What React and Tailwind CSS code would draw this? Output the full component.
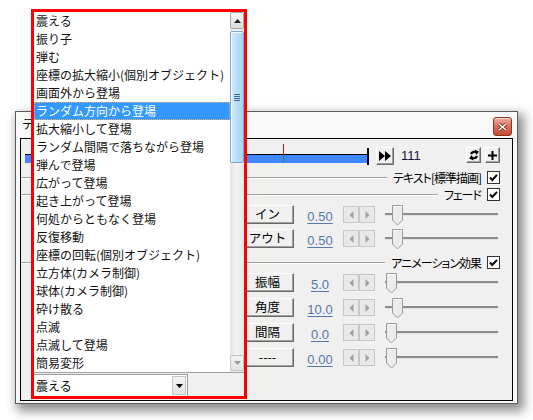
import React from 'react';

const JP = "font-['Noto_Sans_CJK_JP',sans-serif]";

const ITEMS = [
  '震える', '振り子', '弾む', '座標の拡大縮小(個別オブジェクト)', '画面外から登場',
  'ランダム方向から登場', '拡大縮小して登場', 'ランダム間隔で落ちながら登場', '弾んで登場',
  '広がって登場', '起き上がって登場', '何処からともなく登場', '反復移動',
  '座標の回転(個別オブジェクト)', '立方体(カメラ制御)', '球体(カメラ制御)', '砕け散る',
  '点滅', '点滅して登場', '簡易変形',
];

const bevel =
  'bg-[#f0f0f0] border border-t-white border-l-white border-r-[#696969] border-b-[#696969] shadow-[inset_-1px_-1px_0_#a0a0a0]';

// Checkbox (checked)
function Check() {
  return (
    <svg width="13" height="13" viewBox="0 0 13 13" className="shrink-0">
      <rect x="0.5" y="0.5" width="12" height="12" fill="#fff" stroke="#333" />
      <path d="M3 6.5 L5.3 9 L10 3.8" fill="none" stroke="#000" strokeWidth="2" />
    </svg>
  );
}

// Etched divider with label + checkbox
function Divider({ label, className = '' }) {
  return (
    <div className={'flex items-center h-[13px] pr-[12px] ' + className}>
      <div className="flex-1 h-[2px] border-t border-[#a0a0a0] border-b border-b-white" />
      <span className={JP + " ml-[6px] text-[12px] leading-none tracking-[-1px] text-black [font-feature-settings:'palt']"}>{label}</span>
      <span className="ml-[6px]"><Check /></span>
    </div>
  );
}

function Spin() {
  return (
    <div className="flex w-[32px] h-[17px] ml-[3px]">
      {['L', 'R'].map((d) => (
        <div key={d} className="w-[16px] h-[17px] grid place-items-center bg-[#e9e9e9] border border-[#c8c8c8]">
          <svg width="5" height="8" viewBox="0 0 5 8">
            {d === 'L'
              ? <path d="M4.5 0 L0.5 4 L4.5 8 Z" fill="#a2a2a2" />
              : <path d="M0.5 0 L4.5 4 L0.5 8 Z" fill="#a2a2a2" />}
          </svg>
        </div>
      ))}
    </div>
  );
}

function Slider({ pos }) {
  return (
    <div className="relative ml-[10px] w-[113px] h-[19px]">
      <div className="absolute left-0 right-0 top-[8px] h-[3px] bg-[#8c8c8c] border-b border-b-[#e0e0e0]" />
      <svg width="11" height="21" viewBox="0 0 11 21" className="absolute top-0" style={{ left: pos }}>
        <path d="M0.5 0.5 H10.5 V15 L5.5 20 L0.5 15 Z" fill="#ececec" stroke="#9a9a9a" />
        <path d="M1.5 1.5 H9.5" stroke="#fff" />
      </svg>
    </div>
  );
}

function ParamRow({ label, value, pos, className = '' }) {
  return (
    <div className={'flex items-center h-[19px] ' + className}>
      <div className={bevel + ' ml-[220px] w-[53px] h-[19px] grid place-items-center'}>
        <span className={JP + ' text-[12.5px] leading-none text-black'}>{label}</span>
      </div>
      <div className="ml-[6px] w-[40px] text-center">
        <span className="font-['Liberation_Sans',sans-serif] text-[13px] leading-none text-[#5577a8] underline underline-offset-2">{value}</span>
      </div>
      <Spin />
      <Slider pos={pos} />
    </div>
  );
}

function Timeline() {
  return (
    <div className="flex items-start h-[21px] mt-[5px]">
      <div className="relative ml-[4px] w-[344px] h-[21px]">
        <div className="absolute left-0 right-0 top-[10px] h-[9px] bg-[#3f86ff] border-t border-black" />
        <div className="absolute right-0 top-[4px] w-[2px] h-[17px] bg-black" />
        <div className="absolute left-[258px] top-0 w-px h-[11px] bg-[#e01010]" />
        <div className="absolute left-[258px] top-[11px] w-px h-[8px] bg-[#2f8a40]" />
      </div>
      <div className={bevel + ' ml-[7px] mt-[3px] w-[18px] h-[18px] grid place-items-center'}>
        <svg width="12" height="10" viewBox="0 0 12 10">
          <path d="M0 0 L6 5 L0 10 Z M6 0 L12 5 L6 10 Z" fill="#000" />
        </svg>
      </div>
      <span className="ml-[7px] mt-[4px] font-['Liberation_Sans',sans-serif] text-[13px] leading-[16px] text-[#14143c]">111</span>
      <div className="flex-1" />
      <div className={bevel + ' mt-[3px] w-[15px] h-[16px] grid place-items-center'}>
        <svg width="10" height="12" viewBox="0 0 10 12">
          <path d="M7.8 4 A3.4 3.4 0 0 0 2 5" fill="none" stroke="#000" strokeWidth="2.2" />
          <path d="M2.2 8 A3.4 3.4 0 0 0 8 7" fill="none" stroke="#000" strokeWidth="2.2" />
          <path d="M5.5 0.5 L9.8 2.5 L7.5 6 Z" fill="#000" />
          <path d="M4.5 11.5 L0.2 9.5 L2.5 6 Z" fill="#000" />
        </svg>
      </div>
      <div className={bevel + ' ml-[4px] mt-[3px] w-[15px] h-[16px] grid place-items-center'}>
        <svg width="9" height="9" viewBox="0 0 9 9">
          <path d="M3.5 0 H5.5 V3.5 H9 V5.5 H5.5 V9 H3.5 V5.5 H0 V3.5 H3.5 Z" fill="#000" />
        </svg>
      </div>
      <div className="w-[12px]" />
    </div>
  );
}

function SettingWindow() {
  return (
    <div className="ml-[15px] mt-[111px] w-[503px] h-[293px] flex flex-col border border-[#5a5a5a] bg-[#f8f8f8] px-[4px] pb-[2px] shadow-[4px_5px_10px_2px_rgba(0,0,0,0.45)]">
      <div className="h-[26px] flex items-center">
        <span className={JP + ' ml-[2px] mb-[2px] text-[12px] leading-none text-black'}>テ</span>
        <div className="flex-1" />
        <div className="mr-[1px] mt-[3px] w-[19px] h-[19px] rounded-[3px] border border-[#8a3424] bg-gradient-to-b from-[#eab0a2] via-[#d6705c] to-[#c24a33] grid place-items-center shadow-[inset_0_1px_0_rgba(255,255,255,0.5)]">
          <svg width="9" height="8" viewBox="0 0 9 8">
            <path d="M1 1 L8 7 M8 1 L1 7" stroke="#7a2a1c" strokeWidth="3" />
            <path d="M1 1 L8 7 M8 1 L1 7" stroke="#fff" strokeWidth="1.6" />
          </svg>
        </div>
      </div>
      <div className="flex-1 flex flex-col border border-black bg-[#f0f0f0]">
        <Timeline />
        <Divider label="テキスト[標準描画]" className="mt-[6px]" />
        <Divider label="フェード" className="mt-[4px]" />
        <ParamRow label="イン" value="0.50" pos={7} className="mt-[4px]" />
        <ParamRow label="アウト" value="0.50" pos={7} className="mt-[5px]" />
        <Divider label="アニメーション効果" className="mt-[8px]" />
        <ParamRow label="振幅" value="5.0" pos={1} className="mt-[4px]" />
        <ParamRow label="角度" value="10.0" pos={7} className="mt-[6px]" />
        <ParamRow label="間隔" value="0.0" pos={1} className="mt-[6px]" />
        <ParamRow label="----" value="0.00" pos={1} className="mt-[6px]" />
      </div>
    </div>
  );
}

function ScrollBar() {
  return (
    <div className="w-[14px] h-[360px] flex flex-col bg-gradient-to-r from-[#e6e6e6] via-[#f4f4f4] to-[#e6e6e6]">
      <div className="h-[17px] rounded-[2px] border border-[#a8a8a8] bg-gradient-to-b from-[#f6f6f6] to-[#dcdcdc] grid place-items-center">
        <svg width="7" height="4" viewBox="0 0 7 4"><path d="M0 4 L3.5 0 L7 4 Z" fill="#222" /></svg>
      </div>
      <div className="mt-[2px] h-[132px] rounded-[2px] border border-[#7ba9cf] bg-gradient-to-r from-[#d5ecfb] via-[#b9def7] to-[#a6d3f3] shadow-[inset_1px_1px_0_rgba(255,255,255,0.8)] flex flex-col items-center justify-center gap-[1px]">
        <div className="w-[6px] h-px bg-[#3b6e98]" />
        <div className="w-[6px] h-px bg-[#3b6e98]" />
        <div className="w-[6px] h-px bg-[#3b6e98]" />
        <div className="w-[6px] h-px bg-[#3b6e98]" />
      </div>
      <div className="flex-1" />
      <div className="mb-[1px] h-[16px] rounded-[2px] border border-[#c4c4c4] bg-gradient-to-b from-[#f4f4f4] to-[#e4e4e4] grid place-items-center">
        <svg width="7" height="4" viewBox="0 0 7 4"><path d="M0 0 L3.5 4 L7 0 Z" fill="#9a9a9a" /></svg>
      </div>
    </div>
  );
}

function DropList() {
  return (
    <div className="absolute left-[31px] top-[9px] w-[216px] h-[390px] border-[3px] border-[#ff0000] bg-white flex flex-col">
      <div className="flex h-[360px]">
        <ul className="w-[196px]">
          {ITEMS.map((t, i) => {
            const sel = i === 5;
            return (
              <li
                key={t}
                className={
                  JP + ' h-[18px] pl-[2px] text-[12px] leading-[18px] whitespace-nowrap overflow-hidden ' +
                  (sel ? 'bg-[#3399ff] text-white outline outline-1 outline-dotted outline-[#e8b070] -outline-offset-1' : 'text-[#111]')
                }
              >
                {t}
              </li>
            );
          })}
        </ul>
        <ScrollBar />
      </div>
      <div className="flex-1 border-t border-[#a0a0a0] bg-[#f0f0f0] flex items-end">
        <div className="w-[154px] h-[22px] bg-white border border-[#9a9a9a] border-b-0 border-l-0 flex items-center">
          <span className={JP + ' ml-[2px] text-[12px] leading-none text-black'}>震える</span>
          <div className="flex-1" />
          <div className="mr-[1px] w-[14px] h-[19px] bg-gradient-to-b from-[#f4f4f4] to-[#e2e2e2] border border-[#c6c6c6] grid place-items-center">
            <svg width="7" height="4" viewBox="0 0 7 4"><path d="M0 0 L3.5 4 L7 0 Z" fill="#000" /></svg>
          </div>
        </div>
      </div>
    </div>
  );
}

export default function App() {
  return (
    <div className="relative w-[533px] h-[420px] bg-white overflow-hidden">
      <SettingWindow />
      <DropList />
    </div>
  );
}
